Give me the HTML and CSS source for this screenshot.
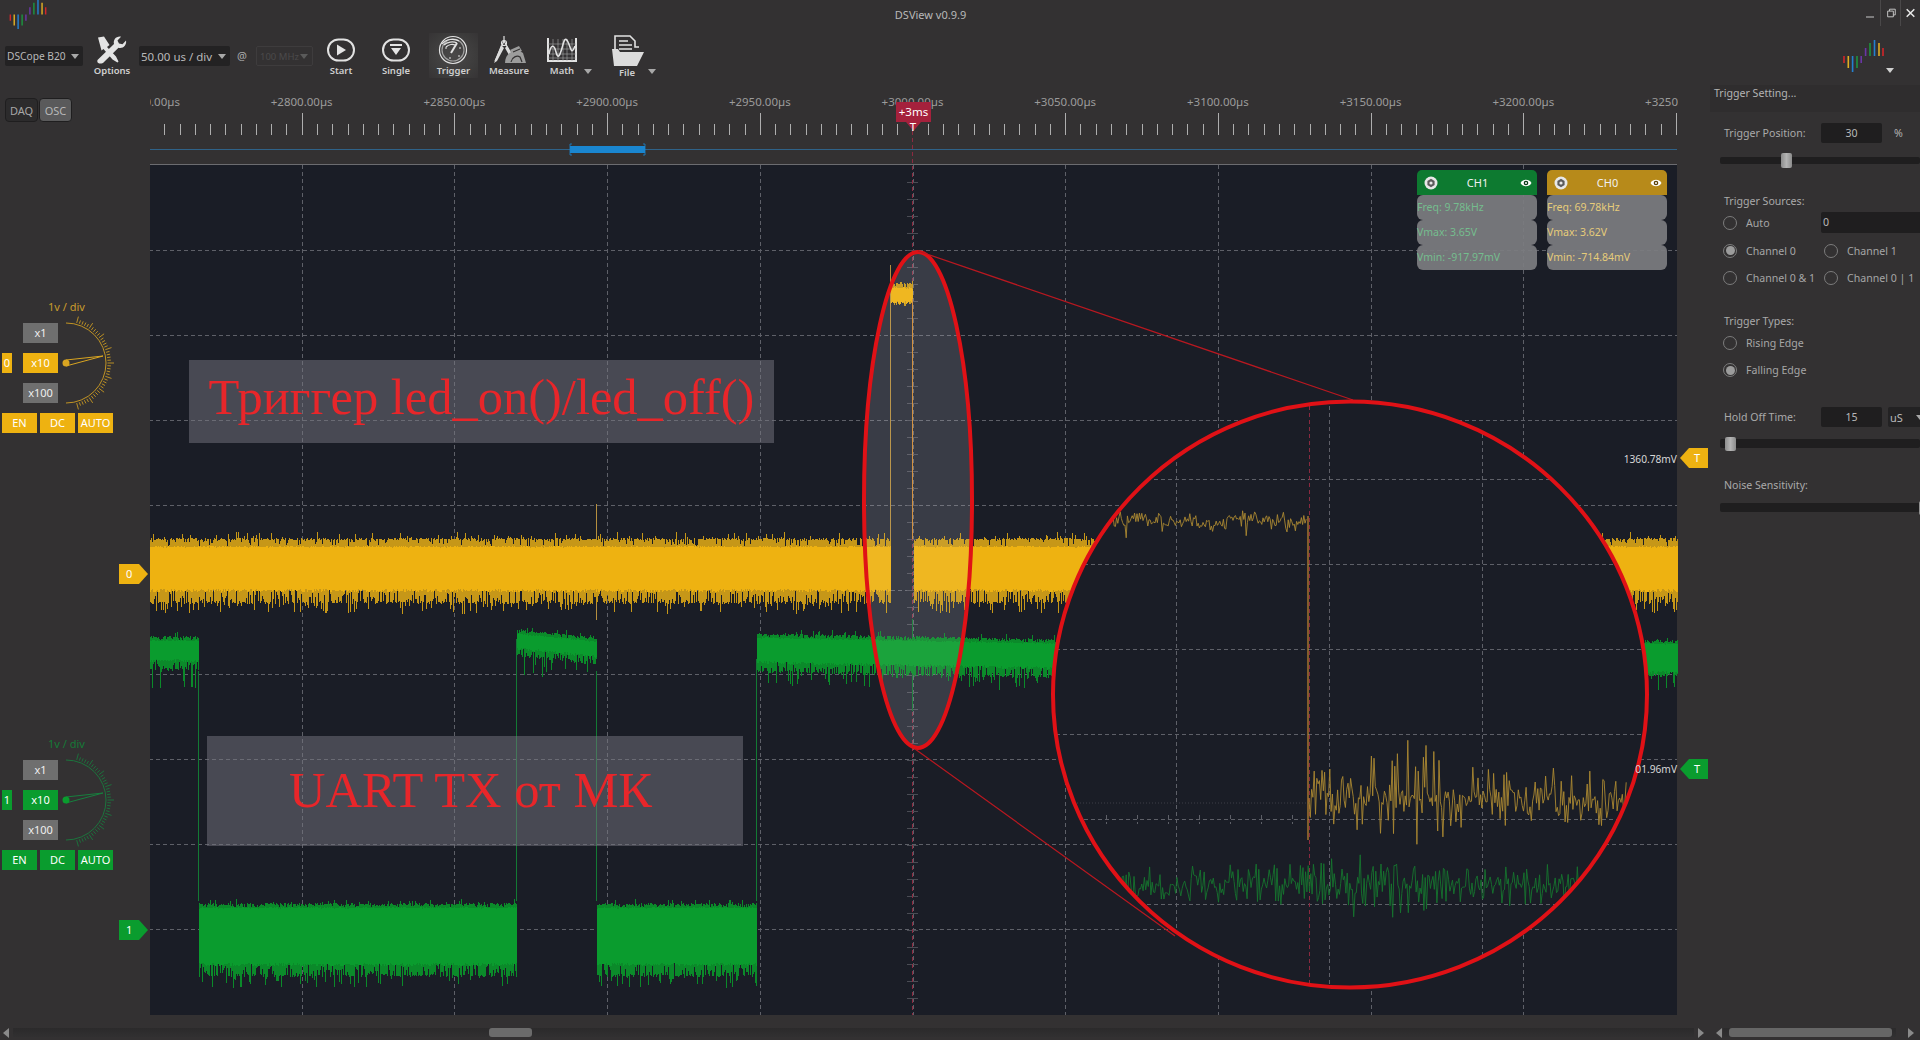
FILE: index.html
```html
<!DOCTYPE html>
<html lang="en">
<head>
<meta charset="utf-8">
<title>DSView v0.9.9</title>
<link rel="stylesheet" href="styles.css">
</head>
<body>
<svg class="defs" width="0" height="0">
  <symbol id="logo" viewBox="0 0 41 32">
    <path class="lg-red" d="M1 16V23M40 8V16"/>
    <path class="lg-gold" d="M5.3 16V28M36 3V16"/>
    <path class="lg-blue" d="M9.6 16V32M31.5 0V16"/>
    <path class="lg-green" d="M14 16V28M27 3V16"/>
    <path class="lg-purple" d="M18.2 16V23M22.6 8V16"/>
  </symbol>
</svg>
<div class="app">
  <header class="titlebar">
    <svg class="logo-small"><use href="#logo"/></svg>
    <div class="title">DSView v0.9.9</div>
    <div class="winbtns">
      <svg class="winicon" viewBox="0 0 20 20"><path d="M6 14H14"/></svg>
      <svg class="winicon sep" viewBox="0 0 20 20"><path d="M7 8H13V14H7ZM9 8V6H15V12H13"/></svg>
      <svg class="winicon sep" viewBox="0 0 20 20"><path class="x" d="M6 6L14 14M14 6L6 14"/></svg>
    </div>
  </header>

  <div class="toolbar">
    <div class="combo c-device"><span>DSCope B20</span><i class="caret"></i></div>
    <div class="tool t-options">
      <svg class="icon" viewBox="0 0 40 28">
        <path class="fill" d="M6 1.5L12 .5 17.5 9 15 11 24 20.5 26.5 25.5 25.5 26.5 20.5 23.5 11.5 13 9.5 14.5Z"/>
        <path class="fill" d="M8 27.5C5.5 27.5 4.5 25 6 23.5L22 8C21 4 24 0 29 .7L25.5 4.5 27 7.5 30.5 8.2 34 4.5C35 9 31 13 26.5 11.8L11 27C10 27.5 9 27.5 8 27.5Z"/>
      </svg>
      <span>Options</span>
    </div>
    <div class="combo c-time"><span>50.00 us / div</span><i class="caret"></i></div>
    <div class="at">@</div>
    <div class="combo c-rate"><span>100 MHz</span><i class="caret"></i></div>
    <div class="tool t-start">
      <svg class="icon" viewBox="0 0 48 28"><rect class="line" x="11" y="3.5" width="26" height="21" rx="10.5"/><path class="fill" d="M20 8.5L29 14 20 19.5Z"/></svg>
      <span>Start</span>
    </div>
    <div class="tool t-single">
      <svg class="icon" viewBox="0 0 48 28"><rect class="line" x="11" y="3.5" width="26" height="21" rx="10.5"/><path class="fill" d="M18 8H30V10H18ZM19 12H29L24 19Z"/></svg>
      <span>Single</span>
    </div>
    <div class="tool t-trigger">
      <svg class="icon" viewBox="0 0 49 28">
        <circle class="line thin" cx="24" cy="14" r="13.5"/>
        <circle class="line thin dim" cx="24" cy="14" r="11"/>
        <path class="line thin" d="M13 8C17 3 25 2 30 5M15 9C18 6 24 5 28 7M17 11C20 8 24 8 26 9"/>
        <path class="line" d="M22 17L28 7"/>
        <path class="line thin" d="M16 12H18M32 12H30M20 22H22M29 20H31"/>
      </svg>
      <span>Trigger</span>
    </div>
    <div class="tool t-measure">
      <svg class="icon" viewBox="0 0 48 28">
        <path class="line thin" d="M19 0V5M19 5L10 25M19 5L27 19"/>
        <circle class="line thin" cx="19" cy="7" r="2.5"/>
        <path class="fill soft" d="M16 9L19 12 12 25 9 27ZM22 10L26 17 24 19 20 12Z"/>
        <path class="fill soft faint" d="M20 27C20 16 31 12 38 17L41 27ZM25 14L34 10 37 15 28 19Z"/>
        <path class="line thin dark" d="M26 26C27 21 32 19 35 21L37 26M28 16L35 13"/>
      </svg>
      <span>Measure</span>
    </div>
    <div class="tool t-math">
      <svg class="icon" viewBox="0 0 48 28">
        <path class="line" d="M10 2V25H38V2"/>
        <path class="line hair" d="M10 8H38M10 13H38M10 18H38M10 22H38M15 3V25M20 3V25M25 3V25M29 3V25M34 3V25"/>
        <path class="line mid" d="M11 18C13 8 16 8 18 16S22 19 24 12 27 0 30 6 33 20 37 10"/>
      </svg>
      <span>Math</span>
    </div>
    <i class="caret c-math"></i>
    <div class="tool t-file">
      <svg class="icon" viewBox="0 0 48 32">
        <path class="line mid" d="M12 17V1H27L32 6V12H36"/>
        <path class="line mid" d="M16 6H25M16 10H29M16 14H29"/>
        <path class="fill soft" d="M11 31L9 14H15L17 17H41L34 31Z"/>
      </svg>
      <span>File</span>
    </div>
    <i class="caret c-file"></i>
    <div class="brand">
      <svg class="logo-big"><use href="#logo"/></svg>
      <i class="caret c-brand"></i>
    </div>
  </div>

  <div class="workspace">
    <div class="main">
      <div class="main-top">
        <aside class="sidebar">
          <div class="modes">
            <button class="mode">DAQ</button>
            <button class="mode on">OSC</button>
          </div>
          <section class="chctl yellow first">
            <div class="vdiv">1v / div</div>
            <div class="chbody">
              <div class="idx">0</div>
              <div class="ranges">
                <div class="rng">x1</div>
                <div class="rng on">x10</div>
                <div class="rng">x100</div>
              </div>
              <svg class="dial" viewBox="0 0 60 92">
                <path class="dial-arc" d="M8 6A40 40 0 0 1 8 86"/>
                <path class="dial-ticks"/>
                <path class="dial-needle" d="M8 43L45 39 8 49Z"/>
                <circle class="dial-dot" cx="8" cy="46" r="3.5"/>
              </svg>
            </div>
            <div class="chfoot"><div class="sw">EN</div><div class="sw">DC</div><div class="sw">AUTO</div></div>
          </section>
          <section class="chctl green second">
            <div class="vdiv">1v / div</div>
            <div class="chbody">
              <div class="idx">1</div>
              <div class="ranges">
                <div class="rng">x1</div>
                <div class="rng on">x10</div>
                <div class="rng">x100</div>
              </div>
              <svg class="dial" viewBox="0 0 60 92">
                <path class="dial-arc" d="M8 6A40 40 0 0 1 8 86"/>
                <path class="dial-ticks"/>
                <path class="dial-needle" d="M8 43L45 39 8 49Z"/>
                <circle class="dial-dot" cx="8" cy="46" r="3.5"/>
              </svg>
            </div>
            <div class="chfoot"><div class="sw">EN</div><div class="sw">DC</div><div class="sw">AUTO</div></div>
          </section>
          <div class="marker m-yellow">0</div>
          <div class="marker m-green">1</div>
        </aside>

        <div class="scope">
          <svg class="plot" viewBox="151 86 1560 943">
            <defs>
              <clipPath id="rulerclip"><rect x="150" y="85" width="1529" height="60"/></clipPath>
              <clipPath id="magclip"><ellipse cx="1351" cy="695.5" rx="297" ry="293"/></clipPath>
            </defs>
            <g class="ruler-text" clip-path="url(#rulerclip)">
              <text x="150" y="107">+2750.00µs</text>
              <text x="302.7" y="107">+2800.00µs</text>
              <text x="455.4" y="107">+2850.00µs</text>
              <text x="608.1" y="107">+2900.00µs</text>
              <text x="760.8" y="107">+2950.00µs</text>
              <text x="913.5" y="107">+3000.00µs</text>
              <text x="1066.2" y="107">+3050.00µs</text>
              <text x="1218.9" y="107">+3100.00µs</text>
              <text x="1371.6" y="107">+3150.00µs</text>
              <text x="1524.3" y="107">+3200.00µs</text>
              <text x="1677" y="107">+3250.00µs</text>
            </g>
            <path id="ruler-ticks" class="ruler-ticks"/>
            <path class="mini-line" d="M150 150.5H1678"/>
            <rect class="mini-thumb" x="571" y="147" width="75" height="7"/>
            <path class="mini-brk" d="M573 145H571V156H573M644 145H646V156H644"/>

            <rect class="plot-bg" x="150" y="166" width="1528" height="850"/>
            <path id="grid" class="grid"/>
            <path class="plot-edge" d="M149.5 1016V165.5H1678"/>
            <path id="axis-ticks" class="grid solid"/>
            <path class="axis" d="M913.5 132V1016"/>

            <ellipse class="lens-fill" cx="919" cy="501" rx="54" ry="248"/>
            <path class="y-thin" d="M597.5 505V621"/>
            <path id="y-dark" class="y-dark"/>
            <path id="y-core" class="y-core"/>
            <path class="y-thin" d="M891.5 266V540"/>
            <path class="y-edge" d="M913.5 300V540"/>
            <path class="g-thin" d="M199.5 672V902M517.5 640V902M597.5 672V902M757.5 660V902M913.5 620V712"/>
            <path id="g-dark" class="g-dark"/>
            <path id="g-core" class="g-core"/>

            <ellipse class="lens" cx="919" cy="501" rx="54" ry="248"/>
            <path class="leader" d="M919 252L1354 401M916 750L1176 937"/>

            <path class="trig-y" d="M1681 459L1690 449H1709V469H1690Z"/>
            <text class="trig-t" x="1698" y="463">T</text>
            <path class="trig-g" d="M1681 770L1690 760H1709V780H1690Z"/>
            <text class="trig-t" x="1698" y="774">T</text>

            <ellipse class="mag-bg" cx="1351" cy="695.5" rx="297" ry="293"/>
            <g clip-path="url(#magclip)">
              <path id="mag-grid" class="grid"/>
              <path class="mag-dot" d="M1060 804H1310"/>
              <path class="mag-axis" d="M1310.5 400V990"/>
              <path id="mag-y" class="mag-y"/>
              <path class="mag-edge" d="M1309 517V841"/>
              <path id="mag-g" class="mag-g"/>
            </g>
            <ellipse class="mag-ring" cx="1351" cy="695.5" rx="297" ry="293"/>

            <text class="volt" x="1678" y="464">1360.78mV</text>
            <text class="volt" x="1678" y="774">01.96mV</text>

            <path class="flag" d="M897 103H932V123H922L914.5 132 907 123H897Z"/>
            <text class="flag-t" x="914.5" y="117">+3ms</text>
            <text class="flag-t" x="914" y="132">T</text>
          </svg>

          <div class="cards">
            <div class="card c-g">
              <div class="card-head">
                <svg class="gear" viewBox="0 0 14 14"><circle class="gear-o" cx="7" cy="7" r="6.5"/><path class="gear-i" d="M7 2.8L10.6 4.9V9.1L7 11.2 3.4 9.1V4.9Z"/><circle class="gear-o" cx="7" cy="7" r="1.6"/></svg>
                <span>CH1</span>
                <svg class="eye" viewBox="0 0 12 8"><path class="eye-o" d="M.5 4C3 -.3 9 -.3 11.5 4 9 8.3 3 8.3 .5 4Z"/><circle class="eye-p" cx="6" cy="4" r="2.3"/><circle class="eye-o" cx="6" cy="4" r="1"/></svg>
              </div>
              <div class="card-row">Freq: 9.78kHz</div>
              <div class="card-row">Vmax: 3.65V</div>
              <div class="card-row">Vmin: -917.97mV</div>
            </div>
            <div class="card c-y">
              <div class="card-head">
                <svg class="gear" viewBox="0 0 14 14"><circle class="gear-o" cx="7" cy="7" r="6.5"/><path class="gear-i" d="M7 2.8L10.6 4.9V9.1L7 11.2 3.4 9.1V4.9Z"/><circle class="gear-o" cx="7" cy="7" r="1.6"/></svg>
                <span>CH0</span>
                <svg class="eye" viewBox="0 0 12 8"><path class="eye-o" d="M.5 4C3 -.3 9 -.3 11.5 4 9 8.3 3 8.3 .5 4Z"/><circle class="eye-p" cx="6" cy="4" r="2.3"/><circle class="eye-o" cx="6" cy="4" r="1"/></svg>
              </div>
              <div class="card-row">Freq: 69.78kHz</div>
              <div class="card-row">Vmax: 3.62V</div>
              <div class="card-row">Vmin: -714.84mV</div>
            </div>
          </div>

          <div class="note note-a">Триггер led_on()/led_off()</div>
          <div class="note note-b">UART TX от МК</div>
        </div>
      </div>
      <div class="hscroll">
        <i class="arrow left"></i>
        <div class="track"><div class="thumb thumb-main"></div></div>
        <i class="arrow right"></i>
      </div>
    </div>

    <aside class="dock">
      <div class="dock-body">
        <div class="dock-title">Trigger Setting...</div>
        <div class="row r-pos"><label class="lab">Trigger Position:</label><div class="field">30</div><span class="unit">%</span></div>
        <div class="slider s-pos"><i class="knob"></i></div>
        <div class="lab head h-src">Trigger Sources:</div>
        <div class="radios r-auto">
          <div class="opt"><i class="radio"></i>Auto</div>
          <div class="field wide">0</div>
        </div>
        <div class="radios r-next">
          <div class="opt"><i class="radio on"></i>Channel 0</div>
          <div class="opt"><i class="radio"></i>Channel 1</div>
        </div>
        <div class="radios r-next">
          <div class="opt"><i class="radio"></i>Channel 0 &amp; 1</div>
          <div class="opt"><i class="radio"></i>Channel 0 | 1</div>
        </div>
        <div class="lab head h-type">Trigger Types:</div>
        <div class="radios r-rise"><div class="opt"><i class="radio"></i>Rising Edge</div></div>
        <div class="radios r-next"><div class="opt"><i class="radio on"></i>Falling Edge</div></div>
        <div class="row r-hold"><label class="lab">Hold Off Time:</label><div class="field">15</div><div class="combo c-unit"><span>uS</span><i class="caret"></i></div></div>
        <div class="slider s-hold"><i class="knob"></i></div>
        <div class="lab head h-noise">Noise Sensitivity:</div>
        <div class="slider s-noise"><i class="knob"></i></div>
      </div>
      <div class="hscroll dock-scroll">
        <i class="arrow left"></i>
        <div class="track"><div class="thumb thumb-dock"></div></div>
        <i class="arrow right"></i>
      </div>
    </aside>
  </div>
</div>
<script src="plot.js"></script>
</body>
</html>
```
FILE: styles.css
```css
* { box-sizing: border-box; }
html, body { margin: 0; height: 100%; overflow: hidden; background: #333132; }
body { font-family: "Noto Sans", "Open Sans", sans-serif; color: #b4b4b4; font-size: 11px; }
.defs { position: absolute; }
.app { width: 1920px; height: 1040px; display: flex; flex-direction: column; background: #333132; }

/* logo */
.lg-red, .lg-gold, .lg-blue, .lg-green, .lg-purple { stroke-width: 1.6; fill: none; }
.lg-red { stroke: #d2262a; }
.lg-gold { stroke: #e0ae23; }
.lg-blue { stroke: #2480d0; }
.lg-green { stroke: #1c943f; }
.lg-purple { stroke: #6a36a6; }

/* title bar */
.titlebar { height: 30px; display: flex; }
.logo-small { width: 38px; height: 29px; margin-left: 9px; }
.title { flex: 1; text-align: center; padding-right: 46px; line-height: 30px; font-size: 11px; color: #b8b8b8; }
.winbtns { display: flex; width: 60px; }
.winicon { width: 20px; height: 26px; fill: none; stroke: #c8c8c8; stroke-width: 1; }
.winicon.sep { border-left: 1px solid #4a4849; }
.winicon .x { stroke: #e8e8e8; stroke-width: 1.6; }

/* toolbar */
.toolbar { height: 55px; display: flex; align-items: flex-start; position: relative; }
.combo { height: 20px; margin-top: 16px; background: #232223; border-radius: 2px; display: flex; align-items: center; justify-content: space-between; padding: 0 4px 0 2px; color: #b9b9b9; white-space: nowrap; }
.c-device { width: 78px; margin-left: 5px; font-size: 10.2px; }
.c-time { width: 91px; margin-left: 7px; font-size: 11.5px; }
.c-rate { width: 57px; margin-left: 8px; background: transparent; border: 1px solid #3e3c3d; color: #4b4a4b; padding-left: 3px; font-size: 9.5px; }
.c-rate .caret { border-top-color: #5a5a5a; }
.at { width: 12px; margin: 18px 0 0 6px; line-height: 16px; text-align: center; color: #aaa; }
.caret { display: block; flex: none; width: 0; height: 0; border-left: 4px solid transparent; border-right: 4px solid transparent; border-top: 5px solid #a8a8a8; }
.tool { width: 48px; padding-top: 6px; display: flex; flex-direction: column; align-items: center; color: #cfcfcf; font-size: 9.5px; font-weight: 600; line-height: 12px; }
.icon { width: 100%; height: 28px; display: block; margin-bottom: 1px; overflow: visible; }
.icon .fill { fill: #e4e4e4; }
.icon .fill.soft { fill: #dcdcdc; }
.icon .fill.faint { fill: #9c9c9c; }
.icon .line { fill: none; stroke: #e2e2e2; stroke-width: 2; }
.icon .line.mid { stroke-width: 1.6; }
.icon .line.thin { stroke-width: 1.2; }
.icon .line.hair { stroke-width: .6; stroke: #a8a8a8; }
.icon .line.dim { stroke: #a0a0a0; }
.icon .line.dark { stroke: #333132; }
.t-options { width: 40px; margin-left: 9px; }
.t-start { margin-left: 4px; }
.t-single { margin-left: 7px; }
.t-trigger { width: 49px; margin: 3px 0 0 9px; padding-top: 3px; height: 45px; background: radial-gradient(ellipse at center, #4a4949 0%, #3c3b3b 70%, #363435 100%); }
.t-measure { margin-left: 7px; }
.t-math { margin-left: 5px; }
.c-math { margin: 39px 0 0 -2px; }
.t-file { margin-left: 11px; padding-top: 5px; }
.t-file .icon { height: 32px; margin-bottom: 0; }
.c-file { margin: 39px 0 0 -3px; }
.brand { margin: 10px 36px 0 auto; width: 41px; height: 32px; position: relative; }
.logo-big { width: 41px; height: 32px; display: block; }
.c-brand { position: absolute; left: 43px; top: 28px; border-top-color: #d0d0d0; }

/* workspace */
.workspace { flex: 1; display: flex; min-height: 0; }
.main { width: 1710px; display: flex; flex-direction: column; }
.main-top { height: 943px; display: flex; }
.sidebar { width: 150px; position: relative; flex: none; }
.modes { display: flex; gap: 1px; margin: 13px 0 0 5px; }
.mode { width: 33px; height: 24px; padding: 0; border: 1px solid #1f1e1f; border-radius: 4px; background: #2c2b2c; color: #a6a6a6; font: 11px "Noto Sans", sans-serif; }
.mode.on { background: #5a5a5b; color: #b8b8b8; }

.chctl { color: #eeb211; width: 120px; }
.chctl.first { margin-top: 178px; }
.chctl.second { margin-top: 304px; }
.vdiv { line-height: 14px; font-size: 11px; padding-left: 48px; }
.chbody { display: flex; margin-top: 9px; height: 80px; }
.idx { width: 10px; height: 20px; margin: 30px 0 0 2px; color: #fff; text-align: center; line-height: 20px; background: currentColor; position: relative; }
.ranges { width: 35px; margin-left: 11px; display: flex; flex-direction: column; gap: 10px; }
.rng { height: 20px; background: #6f6f6f; color: #eee; text-align: center; line-height: 20px; font-size: 11px; }
.dial { width: 60px; height: 92px; margin-top: -6px; flex: none; overflow: visible; }
.dial-arc { fill: none; stroke: currentColor; stroke-width: 1; opacity: .85; }
.dial-ticks { fill: none; stroke: currentColor; stroke-width: 1; opacity: .8; }
.dial-needle { fill: #333132; stroke: currentColor; stroke-width: 1; }
.dial-dot { fill: currentColor; }
.chfoot { display: flex; gap: 3px; margin: 10px 0 0 2px; }
.sw { width: 35px; height: 20px; text-align: center; line-height: 20px; font-size: 11px; color: #fff; }
.chctl.yellow .idx, .chctl.yellow .rng.on, .chctl.yellow .sw { background: #eeb211; color: #fff; }
.chctl.yellow .vdiv { color: #c99c2c; }
.chctl.yellow .dial { color: #d9a521; }
.chctl.green { color: #0a9c2e; }
.chctl.green .idx, .chctl.green .rng.on, .chctl.green .sw { background: #0a9c2e; color: #fff; }
.chctl.green .vdiv { color: #157a37; }
.chctl.green .dial { color: #17803e; }
.chctl.green .dial-dot { fill: #0a9c2e; }

.marker { position: absolute; left: 119px; width: 29px; height: 20px; line-height: 20px; padding-left: 7px; color: #fff; font-size: 11px; clip-path: polygon(0 0, 20px 0, 100% 50%, 20px 100%, 0 100%); }
.m-yellow { top: 479px; background: #eeb211; }
.m-green { top: 835px; background: #0a9c2e; }

/* scope */
.scope { width: 1560px; position: relative; flex: none; }
.plot { display: block; width: 1560px; height: 943px; }
.ruler-text text { fill: #9b9b9b; font-size: 11.5px; text-anchor: middle; }
.ruler-ticks { stroke: #aeaeae; stroke-width: 1; fill: none; shape-rendering: crispEdges; }
.mini-line { stroke: #2f6288; stroke-width: 1; fill: none; }
.mini-thumb { fill: #1a86d0; }
.mini-brk { fill: none; stroke: #1a86d0; stroke-width: .8; }
.plot-bg { fill: #1a1d26; }
.grid { fill: none; stroke: #5e6068; stroke-width: 1; stroke-dasharray: 4 3; shape-rendering: crispEdges; }
.grid.solid { stroke-dasharray: none; stroke: #4a4c54; }
.plot-edge { fill: none; stroke: #6c6c70; stroke-width: 1; }
.axis { fill: none; stroke: #8c2a40; stroke-width: 1; stroke-dasharray: 4 3; }
.y-dark, .y-core, .g-dark, .g-core { fill: none; stroke-width: 1; shape-rendering: crispEdges; }
.y-dark { stroke: #c69718; }
.y-core { stroke: #eeb211; }
.g-dark { stroke: #0b8a2a; }
.g-core { stroke: #0a9c2e; }
.y-thin { stroke: #b58f3f; stroke-width: 1; fill: none; }
.y-edge { stroke: #d08a33; stroke-width: 1; fill: none; }
.g-thin { stroke: #137a34; stroke-width: 1; fill: none; }
.lens-fill { fill: rgba(160, 165, 178, .13); }
.lens { fill: rgba(255, 255, 255, .07); stroke: #e01116; stroke-width: 4; }
.leader { fill: none; stroke: #b81820; stroke-width: 1.2; }
.volt { fill: #d8d8d8; font-size: 10.2px; text-anchor: end; }
.trig-y { fill: #eeb211; }
.trig-g { fill: #0a9c2e; }
.trig-t { fill: #fff; font-size: 11px; text-anchor: middle; }
.mag-bg { fill: #1a1d26; }
.mag-dot { fill: none; stroke: #3c3e46; stroke-width: 1; stroke-dasharray: 1 2; }
.mag-axis { fill: none; stroke: #8a2a40; stroke-width: 1; stroke-dasharray: 4 3; }
.mag-y { fill: none; stroke: #ab8932; stroke-width: .9; }
.mag-edge { fill: none; stroke: #c98a30; stroke-width: 1.2; }
.mag-g { fill: none; stroke: #16752f; stroke-width: .9; }
.mag-ring { fill: none; stroke: #e01116; stroke-width: 4; }
.flag { fill: #a5213c; }
.flag-t { fill: #fff; font-size: 11.5px; text-anchor: middle; }

.cards { position: absolute; left: 1267px; top: 85px; display: flex; gap: 10px; }
.card { width: 120px; font-size: 10.5px; }
.card-head { height: 25px; border-radius: 5px 5px 0 0; display: flex; align-items: center; justify-content: space-between; padding: 0 5px 0 7px; color: #f0f0f0; font-size: 11px; }
.card-head span { margin-right: 3px; }
.c-g .card-head { background: #0d7a30; }
.c-y .card-head { background: #b78a1a; }
.gear { width: 14px; height: 14px; }
.gear-o { fill: #e8e8e8; }
.gear-i { fill: #5c5c5c; }
.eye { width: 12px; height: 8px; }
.eye-o { fill: #fff; }
.eye-p { fill: #0b3a1a; }
.c-y .eye-p { fill: #5c4208; }
.card-row { height: 25px; line-height: 25px; background: rgba(124, 124, 128, .93); border-radius: 6px; white-space: nowrap; }
.c-g .card-row { color: #74bd8e; }
.c-y .card-row { color: #e6cc7a; }

.note { position: absolute; display: flex; align-items: center; justify-content: center; background: rgba(118, 118, 128, .5); color: #e8262a; font-family: "Liberation Serif", serif; font-size: 50.5px; white-space: nowrap; }
.note-a { left: 39px; top: 275px; width: 585px; height: 83px; padding-bottom: 9px; }
.note-b { left: 57px; top: 651px; width: 536px; height: 110px; padding-right: 9px; padding-bottom: 2px; }

/* scrollbars */
.hscroll { height: 9px; display: flex; align-items: center; padding: 0 6px 0 3px; }
.track { flex: 1; height: 9px; background: linear-gradient(#2b2a2b, #313031); margin: 0 4px; }
.thumb { height: 9px; border-radius: 3px; background: #6b6b6b; }
.thumb-main { width: 43px; margin-left: 476px; }
.thumb-dock { width: 163px; margin-left: 6px; background: #666; }
.arrow { width: 0; height: 0; border-top: 5px solid transparent; border-bottom: 5px solid transparent; }
.arrow.left { border-right: 6px solid #8a8a8a; }
.arrow.right { border-left: 6px solid #8a8a8a; }
.dock-scroll { padding: 0 6px 0 6px; margin-top: auto; margin-bottom: 3px; }
.dock-scroll .track { margin: 0 12px 0 1px; }

/* dock */
.dock { width: 210px; display: flex; flex-direction: column; font-size: 10.6px; overflow: hidden; }
.dock-body { flex: 1; overflow: hidden; }
.dock-title { height: 27px; padding: 0 4px; line-height: 16px; background: #2f2d2e; color: #b4b4b4; }
.lab { color: #aaa; white-space: nowrap; }
.row { display: flex; align-items: center; height: 20px; padding-left: 14px; }
.row .lab { width: 97px; flex: none; }
.r-pos { margin-top: 11px; }
.r-hold { margin-top: 27px; }
.field { width: 61px; height: 20px; flex: none; background: #1f1e1f; border-radius: 2px; text-align: center; line-height: 20px; color: #b8b8b8; }
.field.wide { width: 110px; height: 21px; text-align: left; padding-left: 2px; margin-left: -3px; }
.unit { margin-left: 12px; }
.c-unit { width: 40px; margin: 0 0 0 6px; flex: none; font-size: 11px; padding-left: 2px; }
.slider { height: 8px; margin-left: 10px; background: #1f1e1f; border-radius: 2px; position: relative; }
.s-pos { margin-top: 14px; height: 7px; }
.s-hold { margin-top: 12px; height: 9px; }
.s-noise { margin-top: 10px; height: 9px; }
.knob { position: absolute; top: -4px; width: 11px; height: 15px; background: linear-gradient(90deg, #8c8c8c, #b4b4b4 50%, #8c8c8c); border-radius: 2px; }
.s-pos .knob { left: 61px; }
.s-hold .knob { left: 5px; top: -2px; height: 14px; }
.s-noise .knob { left: 199px; top: -2px; height: 14px; }
.head { padding-left: 14px; line-height: 16px; }
.h-src { margin-top: 29px; }
.h-type { margin-top: 25px; }
.h-noise { margin-top: 29px; }
.radios { display: grid; grid-template-columns: 101px 1fr; padding-left: 13px; align-items: center; height: 20px; }
.r-auto { margin-top: 3px; height: 21px; }
.r-next { margin-top: 7.5px; }
.r-rise { margin-top: 3.5px; }
.opt { display: flex; align-items: center; gap: 9px; color: #a6a6a6; white-space: nowrap; }
.radio { width: 14px; height: 14px; border: 1.5px solid #7c7c7c; border-radius: 50%; flex: none; display: flex; align-items: center; justify-content: center; }
.radio.on::after { content: ""; width: 9px; height: 9px; border-radius: 50%; background: #9c9c9c; }
```
FILE: plot.js
```js
(function () {
  var seed = 20240611;
  function rnd() {
    seed = (seed + 0x6D2B79F5) | 0;
    var t = Math.imul(seed ^ (seed >>> 15), 1 | seed);
    t = (t + Math.imul(t ^ (t >>> 7), 61 | t)) ^ t;
    return ((t ^ (t >>> 14)) >>> 0) / 4294967296;
  }
  function set(id, d) { document.getElementById(id).setAttribute('d', d); }

  var X0 = 150, DX = 152.7, Y0 = 166, DY = 84.9;

  // ruler
  var d = '';
  for (var i = 0; i <= 100; i++) {
    var x = Math.round(X0 + i * DX / 10) + 0.5;
    d += 'M' + x + ' ' + (i % 10 === 0 ? 114 : 125) + 'V136';
  }
  set('ruler-ticks', d);

  // grid
  d = '';
  for (i = 1; i < 10; i++) d += 'M' + (Math.round(X0 + i * DX) + 0.5) + ' 166V1016';
  for (i = 1; i < 10; i++) d += 'M150 ' + (Math.round(Y0 + i * DY) + 0.5) + 'H1678';
  set('grid', d);

  // trigger axis ticks
  d = '';
  for (i = 1; i < 50; i++) {
    var y = Math.round(Y0 + i * 17) + 0.5;
    d += 'M908 ' + y + 'H919';
  }
  set('axis-ticks', d);

  // magnified grid
  d = '';
  [1177.5, 1330.5, 1483.5].forEach(function (vx) { d += 'M' + vx + ' 400V990'; });
  [480.5, 565.5, 650.5, 735.5, 820.5, 905.5].forEach(function (hy) { d += 'M1050 ' + hy + 'H1650'; });
  for (x = 1076; x < 1310; x += 31) d += 'M' + (x + 0.5) + ' 816V825';
  set('mag-grid', d);

  // dense sampled band: one vertical segment per pixel column
  function band(x0, x1, o, out) {
    for (var x = x0; x < x1; x++) {
      var f = (x - x0) / Math.max(1, x1 - x0);
      var sh = o.slope ? o.slope * (1 - f) : 0;
      var r = rnd(), r2 = rnd();
      var t = r < (o.fillTop || 0.72) ? o.t + sh + r2 * 2 : o.t + sh + r2 * (o.ct - o.t);
      if (rnd() < 0.08) t = o.t + sh - rnd() * o.up;
      r = rnd(); r2 = rnd();
      var b = r < 0.45 ? o.b + sh - r2 * 3 : o.cb + sh + r2 * (o.b - o.cb);
      if (rnd() < 0.14) b = o.b + sh + rnd() * o.down;
      out.dark += 'M' + (x + 0.5) + ' ' + t.toFixed(1) + 'V' + b.toFixed(1);
      var ct = o.ct + sh + rnd() * 1.5, cb = o.cb + sh + rnd() * 3;
      out.core += 'M' + (x + 0.5) + ' ' + ct.toFixed(1) + 'V' + cb.toFixed(1);
    }
  }

  var Y = { dark: '', core: '' }, G = { dark: '', core: '' };
  var yo = { t: 539, ct: 547, cb: 590, b: 605, up: 6, down: 10 };
  band(150, 892, yo, Y);
  band(915, 1679, yo, Y);
  band(892, 914, { t: 283, ct: 288, cb: 302, b: 305, up: 3, down: 3 }, Y);

  band(150, 200, { t: 637, ct: 641, cb: 660, b: 671, up: 4, down: 20, fillTop: .5 }, G);
  band(518, 598, { t: 638, ct: 642, cb: 656, b: 666, up: 4, down: 19, slope: -8, fillTop: .5 }, G);
  band(758, 1072, { t: 640, ct: 644, cb: 668, b: 680, up: 5, down: 12, slope: -6, fillTop: .5 }, G);
  band(1640, 1679, { t: 641, ct: 644, cb: 672, b: 678, up: 4, down: 13, fillTop: .5 }, G);
  var low = { t: 904, ct: 908, cb: 964, b: 978, up: 4, down: 11, fillTop: .45 };
  band(200, 518, low, G);
  band(598, 758, low, G);

  set('y-dark', Y.dark); set('y-core', Y.core);
  set('g-dark', G.dark); set('g-core', G.core);

  // magnified traces
  function gauss() { return (rnd() + rnd() + rnd() + rnd() - 2) * 1.4; }
  function trace(x0, x1, step, cy, amp, spikeP, spikeUp, spikeDn, wander) {
    var s = 'M' + x0 + ' ' + cy, up = true;
    for (var x = x0; x < x1; x += step) {
      var a = amp(x), v = gauss() * a;
      if (rnd() < spikeP) v = up ? -(0.45 + 0.55 * rnd()) * spikeUp(x) : (0.45 + 0.55 * rnd()) * spikeDn(x);
      up = !up;
      if (wander) v += Math.sin(x / 17) * wander;
      s += 'L' + x.toFixed(1) + ' ' + (cy + v).toFixed(1);
    }
    return s;
  }
  function k(v) { return function () { return v; }; }
  function burst(base, peak, a, b) {
    return function (x) {
      if (x < a || x > b) return base;
      var m = (a + b) / 2, f = 1 - Math.abs(x - m) / ((b - a) / 2);
      return base + (peak - base) * f;
    };
  }
  var my = trace(1114, 1308, 1.2, 522, k(4.5), 0.1, k(12), k(18), 2);
  my += trace(1310, 1628, 1.3, 799, k(10), 0.24,
    burst(30, 60, 1320, 1500), burst(28, 48, 1330, 1500));
  set('mag-y', my);
  var mg = trace(1122, 1582, 1.3, 885, burst(9, 15, 1300, 1470), 0.22,
    burst(20, 38, 1300, 1460), burst(22, 38, 1300, 1460));
  set('mag-g', mg);

  // dial tick marks
  var dials = document.querySelectorAll('.dial-ticks');
  d = '';
  for (i = 0; i <= 40; i++) {
    var ang = (-75 + i * 150 / 40) * Math.PI / 180;
    var r1 = 41.5, r2 = i % 5 === 0 ? 48 : 45;
    d += 'M' + (8 + r1 * Math.cos(ang)).toFixed(1) + ' ' + (46 + r1 * Math.sin(ang)).toFixed(1) +
         'L' + (8 + r2 * Math.cos(ang)).toFixed(1) + ' ' + (46 + r2 * Math.sin(ang)).toFixed(1);
  }
  for (i = 0; i < dials.length; i++) dials[i].setAttribute('d', d);
})();
```
